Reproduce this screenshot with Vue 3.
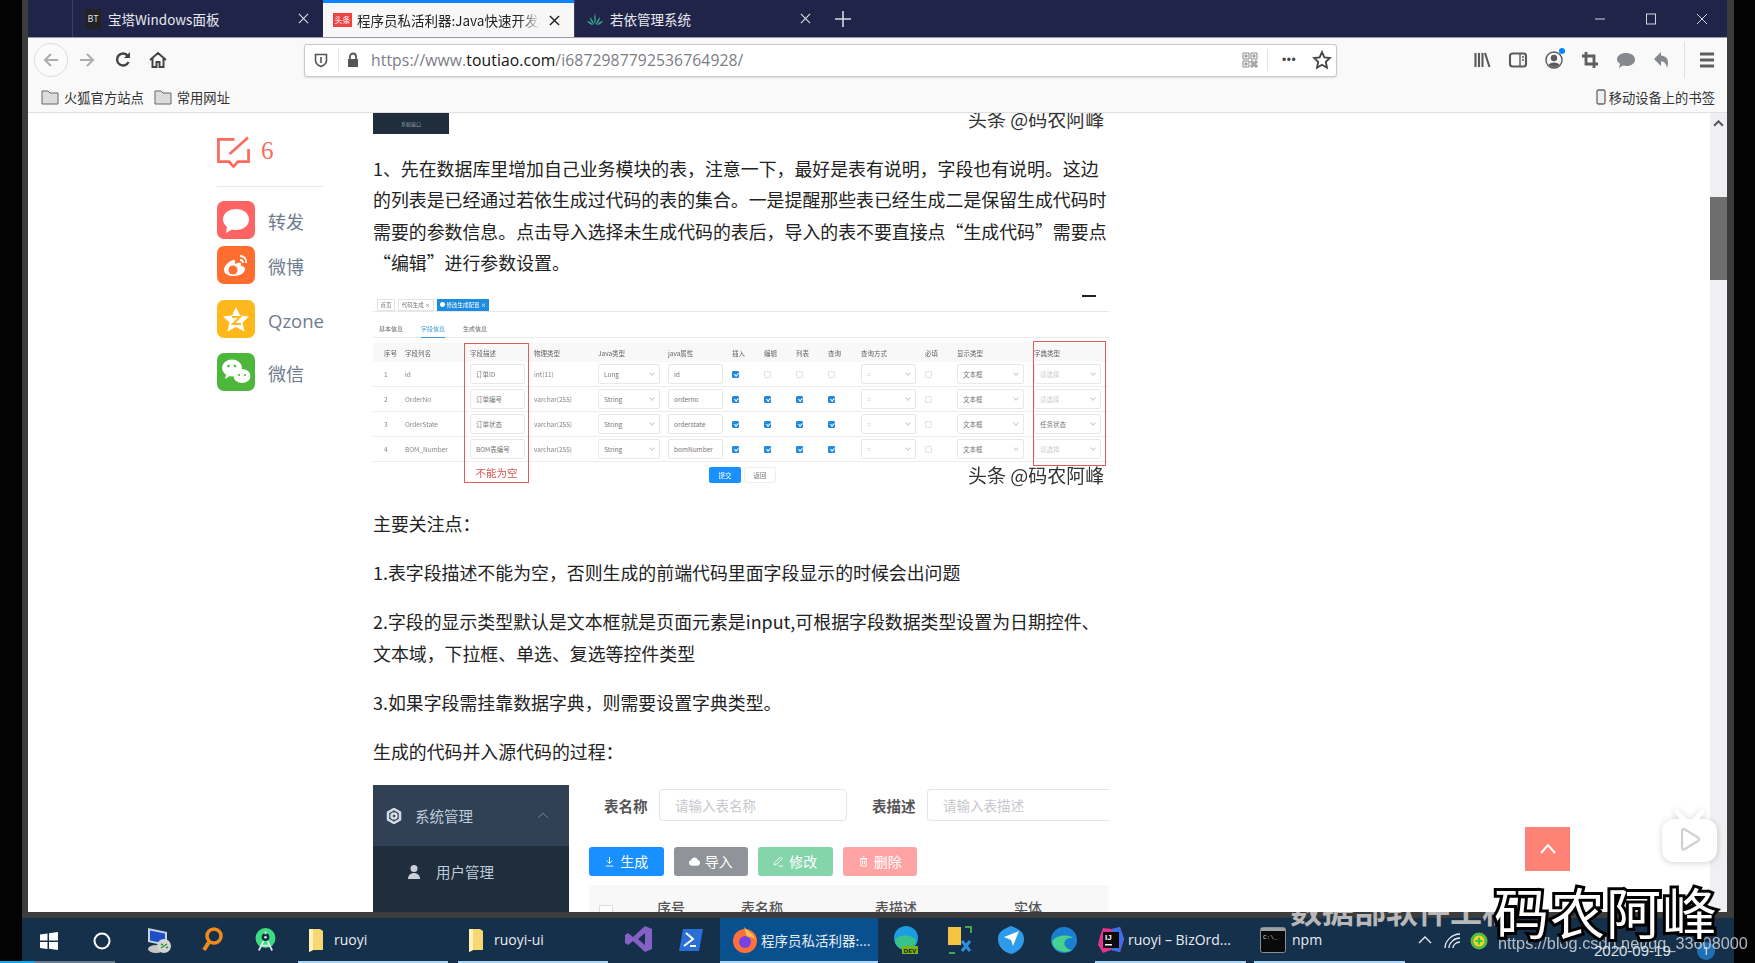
<script setup>
const rows = [
  { n: 1, name: 'id', desc: '订单ID', type: 'int(11)', jt: 'Long', jp: 'id', c: [1, 0, 0, 0], dict: '请选择', on: false },
  { n: 2, name: 'OrderNo', desc: '订单编号', type: 'varchar(255)', jt: 'String', jp: 'orderno', c: [1, 1, 1, 1], dict: '请选择', on: false },
  { n: 3, name: 'OrderState', desc: '订单状态', type: 'varchar(255)', jt: 'String', jp: 'orderstate', c: [1, 1, 1, 1], dict: '任务状态', on: true },
  { n: 4, name: 'BOM_Number', desc: 'BOM表编号', type: 'varchar(255)', jt: 'String', jp: 'bomNumber', c: [1, 1, 1, 1], dict: '请选择', on: false }
]
const heads = ['序号', '字段列名', '字段描述', '物理类型', 'Java类型', 'java属性', '插入', '编辑', '列表', '查询', '查询方式', '必填', '显示类型', '字典类型']
</script>

<template>
  <div class="screen">
    <div class="window">
      <header class="tabbar">
        <div class="tab">
          <span class="bt">BT</span><span class="tab-title">宝塔Windows面板</span>
          <svg class="x" viewBox="0 0 12 12"><path d="M1 1l10 10M11 1L1 11" /></svg>
        </div>
        <div class="tab active">
          <span class="tt">头条</span><span class="tab-title clip">程序员私活利器:Java快速开发框架</span>
          <svg class="x" viewBox="0 0 12 12"><path d="M1 1l10 10M11 1L1 11" /></svg>
        </div>
        <div class="tab">
          <svg class="leaf" viewBox="0 0 16 14"><path d="M8 13C7 9 7 5 8 1c1 4 1 8 0 12zM7 13C5 11 3 8 3 5c2 2 4 5 4 8zM9 13c2-2 4-5 4-8-2 2-4 5-4 8zM6 13C4 13 1 11 0 9c2 0 5 2 6 4zM10 13c2 0 5-2 6-4-2 0-5 2-6 4z" /></svg>
          <span class="tab-title">若依管理系统</span>
          <svg class="x" viewBox="0 0 12 12"><path d="M1 1l10 10M11 1L1 11" /></svg>
        </div>
        <svg class="plus" viewBox="0 0 16 16"><path d="M8 0v16M0 8h16" /></svg>
        <div class="winbtns">
          <svg viewBox="0 0 12 12"><path d="M1 6h10" /></svg>
          <svg viewBox="0 0 12 12"><rect x="1.5" y="1" width="9" height="10" /></svg>
          <svg viewBox="0 0 12 12"><path d="M1 1l10 10M11 1L1 11" /></svg>
        </div>
      </header>

      <div class="toolbar">
        <div class="backbtn">
          <svg viewBox="0 0 20 20" class="nav dim"><path d="M17 10H4M10 4l-6 6 6 6" /></svg>
        </div>
        <svg viewBox="0 0 20 20" class="nav dim forward"><path d="M3 10h13M10 4l6 6-6 6" /></svg>
        <svg viewBox="0 0 20 20" class="nav reload"><path d="M15.5 12a6 6 0 1 1-1-6.5L16 7" /><path class="solid" d="M17 2v6h-6z" /></svg>
        <svg viewBox="0 0 20 20" class="nav home"><path d="M2 10l8-7 8 7M4.500 8.500V17h4v-5h3v5h4V8.500" /></svg>
        <div class="urlbar">
          <svg class="shield" viewBox="0 0 16 16"><path d="M2.500 2.500h11v6c0 3-3 5-5.500 6-2.500-1-5.500-3-5.500-6z" /><path d="M8 5v6" /></svg>
          <span class="sep1"></span>
          <svg class="lock" viewBox="0 0 16 16"><path class="solid" d="M3 7h10v8H3z" /><path d="M5 7V4.500a3 3 0 0 1 6 0V7" /></svg>
          <span class="url">https://www.<b>toutiao.com</b>/i6872987792536764928/</span>
          <svg class="qr" viewBox="0 0 16 16"><path d="M1 1h6v6H1zM9 1h6v6H9zM1 9h6v6H1zM9 9h2v2H9zM13 9h2v2h-2zM11 11h2v2h-2zM9 13h2v2H9zM13 13h2v2h-2zM3 3h2v2H3zM11 3h2v2h-2zM3 11h2v2H3z" /></svg>
          <span class="sep2"></span>
          <span class="dots">•••</span>
          <svg class="star" viewBox="0 0 20 20"><path d="M10 2l2.400 5.400 5.600.6-4.200 3.900 1.200 5.800-5-3-5 3 1.200-5.800L2 8l5.600-.6z" /></svg>
        </div>
        <div class="tools">
          <svg viewBox="0 0 20 20"><path class="mid" d="M3.500 3v14M7 3v14M10.500 3v14M13 3l4.500 14" /></svg>
          <svg viewBox="0 0 20 20"><rect class="mid" x="2" y="3.500" width="16" height="13" rx="2.500" /><path d="M12 3.500v13M14 7h2M14 10h2" /></svg>
          <span class="acct">
            <svg viewBox="0 0 20 20"><circle cx="10" cy="10" r="8" /><circle class="solid" cx="10" cy="8" r="3.200" /><path class="solid" d="M4.500 15c1-3.500 10-3.500 11 0-2 2.500-9 2.500-11 0z" /></svg>
            <i class="bluedot"></i>
          </span>
          <svg viewBox="0 0 20 20"><path class="thick" d="M6 2v12h12M2 6h12v12" /></svg>
          <svg viewBox="0 0 20 20"><path class="solid" d="M10 3c5 0 9 2.500 9 6.500S15 16 11 16c-1.500 0-3 0-4-.4L3 18l1-4.200C2 12.500 1 11.200 1 9.500 1 5.500 5 3 10 3z" /></svg>
          <svg viewBox="0 0 20 20"><path class="solid" d="M9 2L2 9l7 7v-4.500c3 0 5 1.500 6 6.500 2.500-7 .5-12-6-12.500z" /></svg>
          <span class="sep3"></span>
          <svg viewBox="0 0 20 20"><path class="thick" d="M3 4h14M3 10h14M3 16h14" /></svg>
        </div>
      </div>

      <div class="bookmarks">
        <span class="bm">
          <svg class="folder" viewBox="0 0 18 16"><path d="M1 2h6l2 2h8v11H1z" /></svg>火狐官方站点
        </span>
        <span class="bm">
          <svg class="folder" viewBox="0 0 18 16"><path d="M1 2h6l2 2h8v11H1z" /></svg>常用网址
        </span>
        <span class="bm mobile">
          <svg class="phone" viewBox="0 0 10 16"><rect x="1" y="1" width="8" height="14" rx="1.500" /></svg>移动设备上的书签
        </span>
      </div>

      <div class="page">
        <aside class="share">
          <div class="cmt">
            <svg viewBox="0 0 34 33"><path d="M18 3H1.500v23h11l4.500 5 4.500-5h11V13" /><path d="M13 18L32 1" /></svg>
            <span>6</span>
          </div>
          <div class="rule"></div>
          <div class="s-row first">
            <span class="s-ic red"><svg viewBox="0 0 38 38"><path d="M19 8c7.500 0 13 4.500 13 10.500S26.500 29 19 29c-1.500 0-3 0-4-.5L9 32l1-6c-2-2-4-4.500-4-7.500C6 12.500 11.500 8 19 8z" /></svg></span>
            <span class="s-label">转发</span>
          </div>
          <div class="s-row tight">
            <span class="s-ic orange"><svg viewBox="0 0 38 38"><path d="M16 14c-5 2-9 6-9 10 0 4 5 6 10 6 6 0 11-3 11-7 0-2-2-3-4-3 1-3-1-4-3-3l-3 1c1-3-1-5-2-4z" /><circle class="hole" cx="16" cy="24" r="4.500" /><path class="arc" d="M23 10c4 0 7 3 6 7M23 14c2 0 3 1 3 3" /></svg></span>
            <span class="s-label">微博</span>
          </div>
          <div class="s-row gap16">
            <span class="s-ic yellow"><svg viewBox="0 0 38 38"><path d="M19 7l4 8.500 9 1-6.500 6 2 9L19 27l-8.500 4.500 2-9L6 16.500l9-1z" /><path class="z" d="M15 17h8l-7 7h8" /></svg></span>
            <span class="s-label en">Qzone</span>
          </div>
          <div class="s-row gap15">
            <span class="s-ic green"><svg viewBox="0 0 38 38"><ellipse cx="15" cy="15" rx="10" ry="8.500" /><path d="M9 22l-1 4 5-3z" /><ellipse class="o" cx="25" cy="23" rx="8.500" ry="7" /><circle class="e" cx="11.500" cy="13" r="1.300" /><circle class="e" cx="18" cy="13" r="1.300" /><circle class="e2" cx="22" cy="22" r="1.100" /><circle class="e2" cx="28" cy="22" r="1.100" /></svg></span>
            <span class="s-label">微信</span>
          </div>
        </aside>

        <article class="article">
          <div class="topshot">
            <div class="navy"><span>系统接口</span></div>
            <span class="wm clipped">头条 @码农阿峰</span>
          </div>
          <p class="lead">1、先在数据库里增加自己业务模块的表，注意一下，最好是表有说明，字段也有说明。这边<br />的列表是已经通过若依生成过代码的表的集合。一是提醒那些表已经生成二是保留生成代码时<br />需要的参数信息。点击导入选择未生成代码的表后，导入的表不要直接点“生成代码”需要点<br />“编辑”进行参数设置。</p>

          <div class="shot">
            <div class="crumbs">
              <span class="crumb c1">首页</span><span class="crumb c2">代码生成 ×</span><span class="crumb c3">● 修改生成配置 ×</span>
              <i class="dash"></i>
            </div>
            <div class="subtabs">
              <span>基本信息</span><span class="on">字段信息</span><span>生成信息</span>
            </div>
            <div class="grid ghead">
              <span v-for="h in heads" :key="h">{{ h }}</span>
            </div>
            <div v-for="r in rows" :key="r.n" class="grid grow">
              <span>{{ r.n }}</span>
              <span>{{ r.name }}</span>
              <span class="inp w55">{{ r.desc }}</span>
              <span>{{ r.type }}</span>
              <span class="inp w62 sel">{{ r.jt }}</span>
              <span class="inp w55">{{ r.jp }}</span>
              <span v-for="(v, i) in r.c" :key="i" class="cb" :class="{ chk: v }"></span>
              <span class="inp w55 sel faint">=</span>
              <span class="cb"></span>
              <span class="inp w67 sel">文本框</span>
              <span class="inp w67 sel" :class="{ faint: !r.on }">{{ r.dict }}</span>
            </div>
            <div class="actions">
              <span class="btn-primary">提交</span><span class="btn-plain">返回</span>
            </div>
            <div class="redbox rb1"><span>不能为空</span></div>
            <div class="redbox rb2"></div>
            <span class="wm shotwm">头条 @码农阿峰</span>
          </div>

          <p>主要关注点：</p>
          <p>1.表字段描述不能为空，否则生成的前端代码里面字段显示的时候会出问题</p>
          <p>2.字段的显示类型默认是文本框就是页面元素是input,可根据字段数据类型设置为日期控件、<br />文本域，下拉框、单选、复选等控件类型</p>
          <p>3.如果字段需挂靠数据字典，则需要设置字典类型。</p>
          <p>生成的代码并入源代码的过程：</p>

          <div class="shot2">
            <div class="menu">
              <div class="menu-top">
                <svg class="gear" viewBox="0 0 16 16"><path d="M8 1l6 3.500v7L8 15l-6-3.500v-7z" /><circle cx="8" cy="8" r="2.500" /></svg>
                <span>系统管理</span>
                <svg class="chev" viewBox="0 0 12 8"><path d="M1 7l5-5 5 5" /></svg>
              </div>
              <div class="menu-item">
                <svg viewBox="0 0 16 16"><circle cx="8" cy="4.500" r="3.500" /><path d="M2 15c0-8 12-8 12 0z" /></svg>
                <span>用户管理</span>
              </div>
            </div>
            <div class="gen">
              <div class="filters">
                <b>表名称</b><span class="f-in">请输入表名称</span>
                <b class="l2">表描述</b><span class="f-in last">请输入表描述</span>
              </div>
              <div class="gbtns">
                <span class="gb blue"><svg viewBox="0 0 12 12"><path d="M6 1v7M3 5l3 3 3-3M2 11h8" /></svg>生成</span>
                <span class="gb gray"><svg viewBox="0 0 12 12"><path class="fill" d="M3 10a2.500 2.500 0 0 1-.4-5A3.500 3.500 0 0 1 9.500 5 2.500 2.500 0 0 1 9 10z" /></svg>导入</span>
                <span class="gb mint"><svg viewBox="0 0 12 12"><path d="M8 1l2 2-6 6-3 1 1-3zM6 11h5" /></svg>修改</span>
                <span class="gb pink"><svg viewBox="0 0 12 12"><path d="M3 3h6v8H3zM2 3h8M5 1h2M5 5v4M7 5v4" /></svg>删除</span>
              </div>
              <div class="thead">
                <i></i><span class="h1">序号</span><span class="h2">表名称</span><span class="h3">表描述</span><span class="h4">实体</span>
              </div>
            </div>
          </div>
        </article>

        <div class="scrollbar">
          <svg class="up" viewBox="0 0 10 6"><path d="M1 5l4-4 4 4" /></svg>
          <div class="thumb"></div>
        </div>

        <div class="totop"><svg viewBox="0 0 18 12"><path d="M2 10l7-8 7 8" /></svg></div>
        <div class="tv">
          <svg viewBox="0 0 55 52"><path class="ant" d="M15 2l7 8M40 2l-7 8" /><rect x="0" y="9" width="55" height="43" rx="12" /><path class="play" d="M20 21c0-2 1.500-2.500 3-1.500l13 8c1.500 1 1.500 2.500 0 3.500l-13 8c-1.500 1-3 .5-3-1.500z" /></svg>
        </div>
      </div>
    </div>

    <div class="band"></div>
    <footer class="taskbar">
      <svg class="ti win" viewBox="0 0 18 18"><path d="M0 2.500l7.500-1v7H0zM9 1.300l9-1.300v8.500H9zM0 10h7.500v7L0 16zM9 10h9v8l-9-1.300z" /></svg>
      <svg class="ti cort" viewBox="0 0 18 18"><circle cx="9" cy="9" r="7.500" /></svg>
      <svg class="ti comp" viewBox="0 0 26 27"><path d="M2 1l19 4v14L2 15z" fill="#c7d2e2" /><path d="M4 3.500l15 3v10L4 13.500z" fill="#1f4fc8" /><ellipse cx="10" cy="22" rx="8" ry="4" fill="#c6c6c6" /><circle cx="18" cy="19" r="7" fill="#d2d6d2" /><path d="M15 21l6-4M15 17l2 1M20 21l2-1" stroke="#2f8f3f" stroke-width="1.400" /></svg>
      <svg class="ti srch" viewBox="0 0 22 26"><circle cx="13" cy="9" r="7" fill="none" stroke="#f08a1d" stroke-width="3.500" /><path d="M8 15l-5 8" stroke="#f08a1d" stroke-width="4" /></svg>
      <svg class="ti andr" viewBox="0 0 22 24"><circle cx="11" cy="10" r="10.500" fill="#3ddc84" /><circle cx="11" cy="9" r="4" fill="#143046" /><circle cx="11" cy="9" r="1.300" fill="#dfe" /><path d="M11 3v3M4 23l5-10M18 23l-5-10M6 18h10" stroke="#dfe9e6" stroke-width="1.800" fill="none" /></svg>
      <span class="task t1"><svg class="file" viewBox="0 0 16 24"><path d="M1 1h11l3 2v19H5l-4 2z" fill="#f7d774" /><path d="M1 1v23l4-2V1z" fill="#fff1b8" /></svg>ruoyi</span>
      <span class="task t2"><svg class="file" viewBox="0 0 16 24"><path d="M1 1h11l3 2v19H5l-4 2z" fill="#f7d774" /><path d="M1 1v23l4-2V1z" fill="#fff1b8" /></svg>ruoyi-ui</span>
      <svg class="ti vs" viewBox="0 0 28 28"><path d="M20 1l7 3v20l-7 3-12-11-5 4-3-2V10l3-2 5 4zM20 8l-7 6 7 6z" fill="#8661c5" /></svg>
      <svg class="ti ps" viewBox="0 0 26 26"><path d="M5 2h20l-4 22H1z" fill="#2a6fd6" /><path d="M8 6l7 6-9 7M12 19h6" stroke="#fff" stroke-width="2" fill="none" /></svg>
      <span class="task ff">
        <svg class="ffic" viewBox="0 0 26 28"><circle cx="13" cy="15" r="12" fill="#ff7139" /><path d="M12 1c4 4 9 6 12 13-2-2-6-4-9-3z" fill="#ffbd4f" /><circle cx="13" cy="16" r="6" fill="#7542e5" /></svg>程序员私活利器:...
      </span>
      <svg class="ti edge" viewBox="0 0 28 30"><circle cx="14" cy="13" r="12" fill="#1b9de2" /><path d="M3 15c3-6 17-6 21 0 0 6-5 10-10 10C8 25 3 21 3 15z" fill="#37c28a" /><rect x="10" y="21" width="16" height="8" fill="#7cb518" /><text x="18" y="28" class="dev">DEV</text></svg>
      <svg class="ti tool" viewBox="0 0 26 30"><path d="M1 2h13v18H1z" fill="#f5c542" /><path d="M15 16l8 10M23 16l-8 10" stroke="#2d8fe0" stroke-width="3" /><path d="M18 2h6v6M2 28h6" stroke="#4aa44a" stroke-width="2" fill="none" /></svg>
      <svg class="ti feishu" viewBox="0 0 28 30"><path d="M14 1c7 3 13 5 13 13 0 8-6 13-13 15C7 27 1 22 1 14 1 6 7 4 14 1z" fill="#2e9bea" /><path d="M7 12l15-6-6 15-2-6z" fill="#fff" /></svg>
      <svg class="ti edge2" viewBox="0 0 28 28"><circle cx="14" cy="14" r="13" fill="#1b7fd1" /><path d="M2 16c3-8 20-9 24-1 0-1-1-3-5-3-7 0-8 6-5 9 1 2 4 3 6 3-6 4-18 2-20-8z" fill="#46d18d" /></svg>
      <span class="task ij"><svg class="ijic" viewBox="0 0 28 28"><path d="M6 2l9 1 8-2 4 12-4 13-9-2-8 3-5-8 2-9z" fill="#e0348f" /><path d="M15 3l8-2 4 12-4 13-9-2z" fill="#3b6fe6" /><rect x="6" y="6" width="16" height="16" fill="#0c0c0c" /><text x="8" y="14" class="ijt">IJ</text><rect x="8" y="18" width="7" height="1.500" fill="#fff" /></svg>ruoyi – BizOrd...</span>
      <span class="task npm"><svg class="cmd" viewBox="0 0 26 26"><rect x=".5" y=".5" width="25" height="25" rx="2" fill="#0a0a0a" stroke="#8b8f94" /><rect x="1" y="1" width="24" height="3" fill="#9aa0a6" /><text x="3" y="12" class="cmdt">C:\_</text></svg>npm</span>
      <svg class="tray chevup" viewBox="0 0 14 8"><path d="M1 7l6-6 6 6" /></svg>
      <svg class="tray wifi" viewBox="0 0 18 16"><path d="M1 15C1 8 8 1 16 1M5 15c0-5 5-10 11-10M9 15c0-3 3-6 7-6" /></svg>
      <svg class="tray t360" viewBox="0 0 18 20"><circle cx="9" cy="10" r="8.500" fill="#56b848" /><circle cx="9" cy="10" r="5.500" fill="#f5d423" /><path d="M9 6.500v7M5.500 10h7" stroke="#2c5" stroke-width="2" /></svg>
      <i class="bubble">1</i>
      <i class="stripe cyan"></i><i class="stripe grey"></i>
    </footer>

    <div class="subs">数据部软件工程师</div>
    <div class="csdn">https://blog.csdn.net/qq_33608000</div>
    <div class="date">2020-09-19</div>
    <div class="brand">码农阿峰</div>
  </div>
</template>

<style>
html, body { margin: 0; background: #050505; }
</style>

<style scoped>
.screen {
  position: relative;
  width: 1755px;
  height: 963px;
  overflow: hidden;
  background: #030303;
  font-family: "Noto Sans CJK SC", "Noto Sans", sans-serif;
  color: #222;
}
.window {
  width: 1699px;
  height: 912px;
  margin-left: 28px;
  display: flex;
  flex-direction: column;
  box-shadow: -6px 0 0 #3c3c3c, 7px 0 0 #3c3c3c;
}

/* tab bar */
.tabbar {
  height: 37px;
  flex: none;
  display: flex;
  align-items: stretch;
  padding-left: 44px;
  background: #1f2448;
  position: relative;
}
.tab {
  width: 251px;
  display: flex;
  align-items: center;
  padding: 0 14px 0 12px;
  box-sizing: border-box;
  border-left: 1px solid #3a3f60;
  color: #e8e8ee;
  font-size: 13.500px;
}
.tab.active {
  background: #f7f7f8;
  color: #222;
  border-left: 0;
  border-top: 3px solid #0a84ff;
  padding-left: 10px;
}
.tab-title { flex: 1; white-space: nowrap; overflow: hidden; margin-left: 7px; }
.tab.active .tab-title { margin-left: 5px; -webkit-mask-image: linear-gradient(90deg, #000 88%, transparent); mask-image: linear-gradient(90deg, #000 88%, transparent); }
.bt {
  width: 16px;
  height: 20px;
  background: #222;
  color: #ddd;
  font-size: 9px;
  line-height: 20px;
  text-align: center;
}
.tt {
  width: 19px;
  height: 14px;
  flex: none;
  background: #f04142;
  color: #fff;
  font-size: 8px;
  line-height: 14px;
  text-align: center;
}
.leaf { width: 16px; height: 14px; fill: #3aa796; }
.x { width: 11px; height: 11px; fill: none; stroke: #d8d8e0; stroke-width: 1.3; margin-left: 8px; flex: none; }
.active .x { stroke: #222; stroke-width: 1.6; }
.plus { width: 16px; height: 16px; margin: 11px 0 0 10px; fill: none; stroke: #d8d8e0; stroke-width: 1.6; }
.winbtns { margin-left: auto; margin-right: 19px; display: flex; gap: 39px; align-items: center; }
.winbtns svg { width: 12px; height: 12px; fill: none; stroke: #d4d4dc; stroke-width: 1; }

/* toolbar */
.toolbar {
  height: 45px;
  flex: none;
  display: flex;
  align-items: center;
  background: #f9f9fa;
  border-top: 1px solid #9a9aa8;
  box-sizing: border-box;
  padding-left: 6px;
}
.backbtn {
  width: 34px;
  height: 34px;
  border-radius: 50%;
  border: 1px solid #dcdcdc;
  background: #fbfbfb;
  box-sizing: border-box;
  display: flex;
  align-items: center;
  justify-content: center;
  flex: none;
}
.nav { width: 20px; height: 20px; fill: none; stroke: #444; stroke-width: 2; flex: none; }
.nav.dim { stroke: #adadb0; }
.forward { margin-left: 9px; }
.reload { margin-left: 16px; stroke-width: 2.400; }
.solid { fill: currentColor; stroke: none; }
.reload .solid { fill: #444; }
.home { margin-left: 15px; stroke-width: 2; }
.urlbar {
  margin-left: 136px;
  width: 1033px;
  height: 33px;
  flex: none;
  background: #fff;
  border: 1px solid #c8c8cc;
  border-radius: 3px;
  box-sizing: border-box;
  display: flex;
  align-items: center;
  box-shadow: 0 1px 2px rgba(0, 0, 0, .12);
}
.shield { width: 16px; height: 16px; margin-left: 8px; fill: none; stroke: #555; stroke-width: 1.6; flex: none; }
.sep1 { width: 1px; height: 22px; background: #e5e5e5; margin-left: 9px; }
.lock { width: 16px; height: 16px; margin-left: 6px; fill: none; stroke: #555; stroke-width: 1.800; flex: none; color: #555; }
.url { margin-left: 10px; font-family: "Open Sans", sans-serif; font-size: 15.700px; color: #7c7c85; letter-spacing: .1px; white-space: nowrap; flex: 1; }
.url b { font-weight: 400; color: #111; }
.qr { width: 16px; height: 16px; fill: #fff; stroke: #8a8a8a; stroke-width: 1; flex: none; }
.sep2 { width: 1px; height: 22px; background: #e5e5e5; margin-left: 9px; }
.dots { margin-left: 14px; width: 17px; font-size: 12px; line-height: 12px; color: #444; letter-spacing: .5px; white-space: nowrap; font-family: "Liberation Sans", sans-serif; }
.star { width: 20px; height: 20px; margin: 0 4px 0 13px; fill: none; stroke: #444; stroke-width: 1.800; flex: none; }
.tools { display: flex; align-items: center; gap: 16px; margin-left: 135px; color: #6c6c6c; }
.tools svg { width: 20px; height: 20px; fill: none; stroke: #5a5a5a; stroke-width: 1.400; flex: none; display: block; }
.tools .mid { stroke-width: 2.100; }
.tools .thick { stroke-width: 2.800; stroke: #5e5e5e; }
.tools .solid { fill: #85898e; }
.acct { position: relative; display: block; }
.acct .solid { fill: #5a5a5a; }
.bluedot { position: absolute; right: -1px; top: -2px; width: 6px; height: 6px; background: #0a84ff; border-radius: 50%; }
.sep3 { width: 1px; height: 36px; background: #e2e2e2; margin: 0 -4px 0 -4px; }

/* bookmarks */
.bookmarks {
  height: 31px;
  flex: none;
  display: flex;
  align-items: center;
  padding-left: 13px;
  gap: 10px;
  background: #f9f9fa;
  border-bottom: 1px solid #e0e0e2;
  box-sizing: border-box;
  font-size: 13.300px;
  color: #333;
}
.bm { display: flex; align-items: center; gap: 5px; white-space: nowrap; }
.folder { width: 18px; height: 16px; fill: #dcdcda; stroke: #666; stroke-width: 1; }
.bm.mobile { margin-left: auto; margin-right: 12px; gap: 3px; }
.phone { width: 10px; height: 16px; fill: #f0f0f0; stroke: #666; stroke-width: 1.300; }

/* page */
.page {
  flex: 1;
  min-height: 0;
  position: relative;
  display: flex;
  background: #fff;
  overflow: hidden;
}
.share { width: 106px; margin: 23px 0 0 189px; flex: none; }
.cmt { display: flex; align-items: flex-start; gap: 11px; color: #f85959; height: 33px; }
.cmt svg { width: 33px; height: 33px; fill: none; stroke: #fb6a5e; stroke-width: 2.800; }
.cmt span { font-family: "Liberation Serif", serif; font-size: 25px; line-height: 28px; margin-top: 1px; color: #f96b5e; }
.rule { height: 1px; background: #e8e8e8; margin-top: 17px; }
.s-row { display: flex; align-items: center; gap: 13px; }
.s-row.first { margin-top: 14px; }
.s-row.tight { margin-top: 7px; }
.s-row.gap16 { margin-top: 16px; }
.s-row.gap15 { margin-top: 15px; }
.s-ic { width: 38px; height: 38px; border-radius: 7px; flex: none; display: block; }
.s-ic svg { width: 38px; height: 38px; display: block; fill: #fff; }
.red { background: #ff6363; }
.orange { background: #ff6e2f; }
.orange .hole { fill: #ff6e2f; }
.orange .arc { fill: none; stroke: #fff; stroke-width: 1.800; }
.yellow { background: #ffb81c; }
.yellow .z { fill: none; stroke: #ffb81c; stroke-width: 2; }
.green { background: #4db73c; }
.green .o { fill: #fff; }
.green .e, .green .e2 { fill: #4db73c; }
.s-label { font-size: 18px; color: #6f7c90; padding-top: 2px; }
.s-label.en { font-family: "Open Sans", sans-serif; font-size: 18.500px; }
.article { width: 736px; margin-left: 50px; flex: none; font-size: 17.900px; line-height: 31.400px; color: #222; }
.article p { margin: 0 0 17.800px; white-space: nowrap; }
.article p.lead { margin-bottom: 16.400px; }
.topshot { height: 22px; margin-bottom: 18px; position: relative; overflow: hidden; }
.navy { width: 76px; height: 21px; background: #1f2d3d; display: flex; align-items: center; justify-content: center; font-size: 5px; line-height: 8px; color: #97a3b0; }
.wm { position: absolute; font-size: 19px; line-height: 24px; color: #333; white-space: nowrap; text-shadow: 0 0 1px #fff; }
.clipped { left: 595px; top: -6px; }

/* reference table image */
.shot { height: 195px; margin-bottom: 18px; position: relative; font-size: 6.500px; line-height: 10px; color: #858585; filter: blur(.35px); }
.crumbs { display: flex; gap: 3px; height: 17px; padding: 4px 0 0 4px; box-sizing: border-box; border-bottom: 1px solid #e8e8e8; position: relative; align-items: flex-start; }
.crumb { border: 1px solid #e3e3e3; line-height: 10px; color: #777; font-size: 5.500px; white-space: nowrap; text-align: center; box-sizing: border-box; flex: none; }
.c1 { width: 18px; }
.c2 { width: 36px; }
.c3 { width: 52px; background: #1d8ce0; color: #fff; border-color: #1d8ce0; }
.dash { position: absolute; right: 13px; top: 0; width: 14px; height: 1.500px; background: #222; }
.subtabs { height: 26px; display: flex; gap: 18px; padding-left: 6px; align-items: flex-start; border-bottom: 1px solid #ececec; box-sizing: border-box; font-size: 6px; color: #666; }
.subtabs span { height: 25px; line-height: 33px; }
.subtabs .on { color: #3a9bdc; border-bottom: 1px solid #3a9bdc; }
.grid {
  display: grid;
  grid-template-columns: 21px 65px 64px 64px 70px 64px 32px 32px 32px 33px 64px 32px 77px 74px;
  padding-left: 11px;
  align-items: center;
  white-space: nowrap;
}
.ghead { height: 19px; margin-top: 5px; background: #f8f8f9; color: #666; }
.grow { height: 25px; border-bottom: 1px solid #ececec; box-sizing: border-box; }
.inp { height: 20px; line-height: 18px; border: 1px solid #e8e8e8; border-radius: 2px; box-sizing: border-box; padding-left: 5px; color: #777; position: relative; background: #fff; }
.w55 { width: 55px; }
.w62 { width: 62px; }
.w67 { width: 67px; }
.sel::after { content: ""; position: absolute; right: 5px; top: 6px; width: 3px; height: 3px; border-right: 1px solid #ccc; border-bottom: 1px solid #ccc; transform: rotate(45deg); }
.faint { color: #ccc; }
.cb { width: 7px; height: 7px; border: 1px solid #e4e4e4; box-sizing: border-box; border-radius: 1px; display: block; position: relative; }
.cb.chk { background: #1f8ae0; border-color: #1f8ae0; }
.cb.chk::after { content: ""; position: absolute; left: 1.500px; top: 0; width: 1.500px; height: 3px; border-right: 1px solid #fff; border-bottom: 1px solid #fff; transform: rotate(45deg); }
.actions { display: flex; gap: 3px; padding-left: 336px; margin-top: 5px; }
.btn-primary, .btn-plain { width: 32px; height: 16px; line-height: 16px; text-align: center; border-radius: 2px; box-sizing: border-box; }
.btn-primary { background: #1890ff; color: #fff; }
.btn-plain { border: 1px solid #eee; line-height: 14px; color: #777; }
.redbox { position: absolute; border: 1px solid #e25a5a; box-sizing: border-box; }
.rb1 { left: 91px; top: 48px; width: 65px; height: 140px; display: flex; align-items: flex-end; justify-content: center; }
.rb1 span { font-family: "Liberation Serif", "Noto Sans CJK SC", serif; font-size: 10.500px; line-height: 16px; color: #d9534f; }
.rb2 { left: 660px; top: 46px; width: 73px; height: 125px; }
.shotwm { left: 595px; top: 168px; filter: none; }

/* second image */
.shot2 { height: 128px; display: flex; overflow: hidden; }
.menu { width: 196px; flex: none; background: #1f2d3d; color: #bfcbd9; font-size: 14.500px; line-height: 20px; }
.menu-top { height: 61px; background: #304156; display: flex; align-items: center; padding-left: 13px; position: relative; }
.gear { width: 16px; height: 16px; fill: none; stroke: #d5dbe3; stroke-width: 2.500; margin-right: 13px; }
.chev { position: absolute; right: 20px; top: 26px; width: 12px; height: 8px; fill: none; stroke: #6f7e91; stroke-width: 1; }
.menu-item { height: 52px; display: flex; align-items: center; padding-left: 33px; }
.menu-item svg { width: 16px; height: 16px; fill: #c8d0da; margin-right: 14px; }
.gen { flex: 1; padding: 4px 0 0 20px; min-width: 0; }
.filters { display: flex; align-items: center; height: 32px; font-size: 14.500px; color: #555; white-space: nowrap; margin-left: 15px; }
.filters b { width: 55px; flex: none; }
.f-in { width: 188px; height: 32px; line-height: 30px; border: 1px solid #e3e5e8; border-radius: 4px; box-sizing: border-box; padding-left: 15px; color: #c6c8cc; font-size: 13.500px; flex: none; }
.filters .l2 { margin-left: 25px; }
.f-in.last { width: 200px; border-right: 0; border-radius: 4px 0 0 4px; }
.gbtns { display: flex; gap: 10px; margin-top: 26px; }
.gb { width: 74.500px; height: 29px; border-radius: 3px; color: #fff; font-size: 14px; white-space: nowrap; display: flex; align-items: center; justify-content: center; gap: 5px; }
.gb svg { width: 11px; height: 11px; fill: none; stroke: #fff; stroke-width: 1; flex: none; }
.gb .fill { fill: #fff; }
.blue { background: #1890ff; }
.gray { background: #909399; }
.mint { background: #85d5ab; }
.pink { background: #ffa4a4; }
.thead { height: 40px; margin-top: 9px; background: #f8f8f9; display: flex; font-size: 14px; line-height: 44px; color: #555; font-weight: 500; position: relative; }
.thead i { position: absolute; left: 10px; top: 20px; width: 14px; height: 14px; background: #fff; border: 1px solid #ddd; box-sizing: border-box; }
.thead span { position: absolute; top: 0; white-space: nowrap; }
.h1 { left: 68px; }
.h2 { left: 152px; }
.h3 { left: 286px; }
.h4 { left: 425px; }

/* scrollbar and floats */
.scrollbar { position: absolute; right: 0; top: 0; bottom: 0; width: 17px; background: #f0f0f2; }
.up { position: absolute; left: 3px; top: 7px; width: 11px; height: 7px; fill: none; stroke: #555; stroke-width: 1.800; }
.thumb { position: absolute; left: 0; top: 84px; width: 17px; height: 83px; background: #6e6e6e; }
.totop { position: absolute; left: 1497px; top: 714px; width: 45px; height: 44px; background: #ff8276; display: flex; align-items: center; justify-content: center; }
.totop svg { width: 18px; height: 12px; fill: none; stroke: #fff; stroke-width: 2; }
.tv { position: absolute; left: 1634px; top: 697px; width: 55px; height: 52px; filter: drop-shadow(0 1px 3px rgba(0, 0, 0, .18)); }
.tv svg { width: 55px; height: 52px; fill: #fff; display: block; }
.tv .ant { fill: none; stroke: #fff; stroke-width: 5; stroke-linecap: round; }
.tv .play { fill: #fff; stroke: #cfd0d4; stroke-width: 2.200; }

/* taskbar */
.band { height: 6px; width: 1712px; margin-left: 22px; background: #3c3c3c; }
.taskbar {
  position: relative;
  height: 45px;
  width: 1712px;
  margin-left: 22px;
  background: #15304a;
  color: #e8edf2;
  font-size: 14px;
  font-family: "Open Sans", "Noto Sans CJK SC", sans-serif;
}
.ti, .task, .tray { position: absolute; }
.ti { display: block; }
.win { left: 18px; top: 14px; width: 18px; height: 18px; fill: #fff; }
.cort { left: 71px; top: 14px; width: 18px; height: 18px; fill: none; stroke: #fff; stroke-width: 2; }
.comp { left: 124px; top: 9px; width: 26px; height: 27px; }
.srch { left: 179px; top: 9px; width: 22px; height: 26px; }
.andr { left: 233px; top: 10px; width: 21px; height: 24px; }
.task { top: 0; height: 45px; display: flex; align-items: center; border-bottom: 2px solid #a9d4f5; white-space: nowrap; box-sizing: border-box; }
.t1 { left: 276px; width: 150px; padding-left: 10px; gap: 10px; }
.t2 { left: 436px; width: 150px; padding-left: 10px; gap: 10px; }
.file { width: 16px; height: 24px; flex: none; }
.vs { left: 603px; top: 7px; width: 28px; height: 28px; }
.ps { left: 656px; top: 9px; width: 26px; height: 26px; }
.ff { left: 698px; width: 158px; padding-left: 12px; gap: 3px; background: #08518e; font-size: 13.500px; font-family: "Noto Sans CJK SC", sans-serif; }
.ffic { width: 26px; height: 28px; flex: none; }
.edge { left: 870px; top: 7px; width: 28px; height: 30px; }
.dev { font-size: 6px; font-weight: 700; fill: #111; text-anchor: middle; font-family: "Liberation Sans", sans-serif; }
.tool { left: 925px; top: 7px; width: 26px; height: 30px; }
.feishu { left: 975px; top: 7px; width: 28px; height: 30px; }
.edge2 { left: 1028px; top: 8px; width: 28px; height: 28px; }
.ij { left: 1073px; width: 151px; padding-left: 2px; gap: 3px; }
.ijic { width: 28px; height: 28px; flex: none; }
.ijt { font-size: 8px; font-weight: 700; fill: #fff; font-family: "Liberation Sans", sans-serif; }
.npm { left: 1232px; width: 151px; padding-left: 6px; gap: 6px; }
.cmd { width: 26px; height: 26px; flex: none; }
.cmdt { font-size: 6px; fill: #ddd; font-family: "Liberation Mono", monospace; }
.tray { fill: none; stroke: #e8edf2; stroke-width: 1.300; }
.chevup { left: 1396px; top: 18px; width: 14px; height: 8px; }
.wifi { left: 1422px; top: 15px; width: 18px; height: 16px; }
.t360 { left: 1448px; top: 13px; width: 18px; height: 20px; stroke: none; }
.bubble { position: absolute; left: 1675px; top: 24px; width: 18px; height: 18px; border-radius: 50%; background: #1f6fb5; color: #fff; font-size: 11px; line-height: 18px; text-align: center; font-style: normal; }
.stripe { position: absolute; bottom: 0; height: 2px; }
.cyan { left: -22px; width: 57px; background: #15a6e6; }
.grey { left: 13px; width: 80px; background: #6a7c8c; }

/* video overlays */
.subs { position: absolute; left: 1290px; top: 889px; font-size: 32px; line-height: 40px; font-weight: 700; color: #b8b8b8; white-space: nowrap; width: 205px; overflow: hidden; clip-path: inset(23px 0 0 0); }
.csdn { position: absolute; left: 1498px; top: 933px; font-family: "Liberation Sans", sans-serif; font-size: 16.300px; line-height: 20px; color: #d0d5da; white-space: nowrap; opacity: .85; }
.date { position: absolute; left: 1594px; top: 942px; font-family: "Liberation Sans", sans-serif; font-size: 15px; line-height: 18px; color: #dfe3e8; white-space: nowrap; }
.brand {
  position: absolute;
  left: 1494px;
  top: 870px;
  font-size: 55px;
  line-height: 80px;
  letter-spacing: 1px;
  color: #fff;
  -webkit-text-stroke: 6px #000;
  paint-order: stroke fill;
  white-space: nowrap;
}
</style>
